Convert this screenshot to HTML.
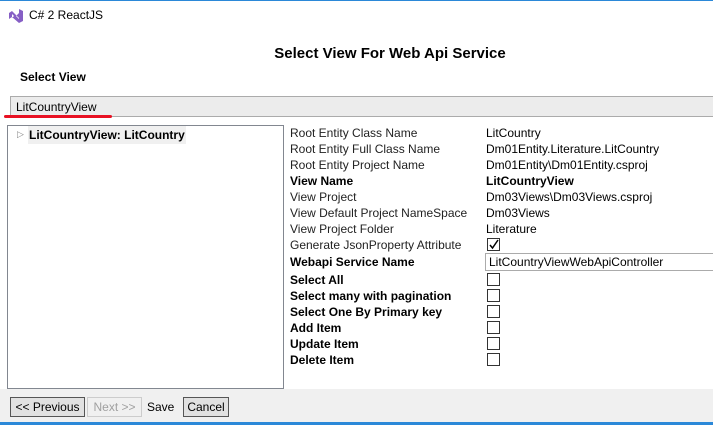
<!DOCTYPE html>
<html><head><style>
*{margin:0;padding:0;box-sizing:border-box}
body{width:713px;height:424px;overflow:hidden;background:#fff;font-family:"Liberation Sans",sans-serif;font-size:12px;color:#000;position:relative;border-top:1px solid #2b88d8}
.a{position:absolute;white-space:nowrap}
.b{font-weight:bold}
.l{position:absolute;left:290px;white-space:nowrap;line-height:16px;color:#222}
.l.b{color:#000}
.v{position:absolute;left:486px;white-space:nowrap;line-height:16px}
.cb{position:absolute;left:487px;width:13px;height:13px;border:1px solid #333;background:#fff}
.btn{position:absolute;top:396px;height:20px;border:1px solid #adadad;background:#e1e1e1;line-height:18px;text-align:center;font-size:12px}
</style></head><body>
<svg class="a" style="left:8px;top:7px" width="16" height="16" viewBox="0 0 16 16"><path d="M1 5 L4 3 L11 10 L11 1 L15 3 L15 13 L11 15 L4 9 L1 11Z M4 6 L4 10 L6 8Z M11 5 L8 8 L11 11Z" fill="#865fc5" fill-rule="evenodd"/></svg>
<div class="a" style="left:29px;top:7px;font-size:12px">C# 2 ReactJS</div>
<div class="a b" style="left:0;width:780px;text-align:center;top:44px;font-size:15px">Select View For Web Api Service</div>
<div class="a b" style="left:20px;top:69px">Select View</div>
<div class="a" style="left:10px;top:95px;width:710px;height:21px;background:#ececec;border:1px solid #ababab"></div>
<div class="a" style="left:16px;top:99px">LitCountryView</div>
<div class="a" style="left:4px;top:114px;width:108px;height:3px;background:#e81123;border-radius:2px"></div>
<div class="a" style="left:7px;top:124px;width:277px;height:264px;border:1px solid #828790;background:#fff"></div>
<div class="a" style="left:17px;top:128px;font-size:9px;color:#888">▷</div>
<div class="a b" style="left:28px;top:125px;background:#f0f0f0;padding:2px 1px;line-height:14px">LitCountryView: LitCountry</div>
<div class="l" style="top:124px">Root Entity Class Name</div><div class="v" style="top:124px">LitCountry</div>
<div class="l" style="top:140px">Root Entity Full Class Name</div><div class="v" style="top:140px">Dm01Entity.Literature.LitCountry</div>
<div class="l" style="top:156px">Root Entity Project Name</div><div class="v" style="top:156px">Dm01Entity\Dm01Entity.csproj</div>
<div class="l b" style="top:172px">View Name</div><div class="v b" style="top:172px">LitCountryView</div>
<div class="l" style="top:188px">View Project</div><div class="v" style="top:188px">Dm03Views\Dm03Views.csproj</div>
<div class="l" style="top:204px">View Default Project NameSpace</div><div class="v" style="top:204px">Dm03Views</div>
<div class="l" style="top:220px">View Project Folder</div><div class="v" style="top:220px">Literature</div>
<div class="l" style="top:236px">Generate JsonProperty Attribute</div>
<div class="cb" style="top:237px"><svg width="11" height="11" style="position:absolute;left:0;top:0"><path d="M2 6 L4.5 9 L10 1" stroke="#000" stroke-width="1.5" fill="none"/></svg></div>
<div class="l b" style="top:253px">Webapi Service Name</div>
<div class="a" style="left:485px;top:252px;width:240px;height:18px;border:1px solid #ababab;background:#fff"></div>
<div class="a" style="left:489px;top:254px">LitCountryViewWebApiController</div>
<div class="l b" style="top:271px">Select All</div><div class="cb" style="top:272px"></div>
<div class="l b" style="top:287px">Select many with pagination</div><div class="cb" style="top:288px"></div>
<div class="l b" style="top:303px">Select One By Primary key</div><div class="cb" style="top:304px"></div>
<div class="l b" style="top:319px">Add Item</div><div class="cb" style="top:320px"></div>
<div class="l b" style="top:335px">Update Item</div><div class="cb" style="top:336px"></div>
<div class="l b" style="top:351px">Delete Item</div><div class="cb" style="top:352px"></div>
<div class="a" style="left:0;top:388px;width:713px;height:34px;background:#f0f0f0"></div>
<div class="a" style="left:0;top:421px;width:713px;height:3px;background:#2b88d8"></div>
<div class="btn" style="left:10px;width:75px;border-color:#555">&lt;&lt; Previous</div>
<div class="btn" style="left:87px;width:55px;color:#a0a0a0;background:#f0f0f0;border-color:#ccc">Next &gt;&gt;</div>
<div class="a" style="left:147px;top:399px">Save</div>
<div class="btn" style="left:183px;width:46px;border-color:#555">Cancel</div>
</body></html>
